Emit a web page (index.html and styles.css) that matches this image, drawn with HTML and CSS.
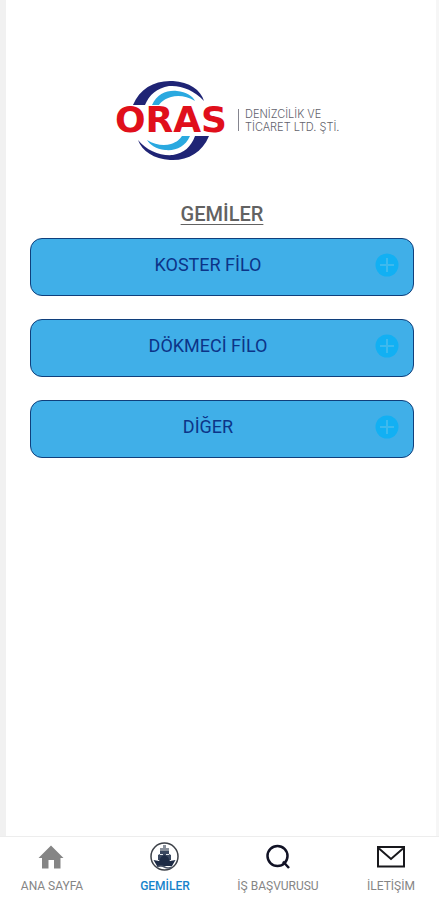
FILE: index.html
```html
<!DOCTYPE html>
<html lang="tr">
<head>
<meta charset="utf-8">
<meta name="viewport" content="width=device-width, initial-scale=1">
<title>Gemiler</title>
<link rel="stylesheet" href="styles.css">
</head>
<body>
<main class="page">
  <header class="brand">
    <svg class="brand-logo" viewBox="0 0 230 82" role="img" aria-label="ORAS Denizcilik ve Ticaret Ltd. Şti.">
      <path fill="#1f2475" d="M22 25C29 8 44 0 62 1C78 2 90 10 93 21C83 10 70 5 58 6C46 8 38 15 34 25Z"/>
      <path fill="#2aa9e0" d="M41 25C46 14 56 10 66 11C75 12 82 16 84 21C76 16 67 15 60 17C54 19 51 21 48 25Z"/>
      <path fill="#1f2475" d="M98 56C91 73 76 81 59 80C43 79 31 71 27 60C36 71 49 76 62 75C73 73 80 67 84 56Z"/>
      <path fill="#2aa9e0" d="M79 56C74 67 65 71 54 70C45 69 39 65 36 60C44 65 53 66 60 64C66 62 69 59 71 56Z"/>
      <text class="logo-name" x="60" y="52" text-anchor="middle">ORAS</text>
      <path stroke="#85858f" stroke-width="1" d="M127.500 29V51"/>
      <text class="logo-caption" x="134" y="38">DENİZCİLİK VE</text>
      <text class="logo-caption" x="134" y="51">TİCARET LTD. ŞTİ.</text>
    </svg>
  </header>
  <h1 class="title">GEMİLER</h1>
  <div class="fleets">
    <button class="fleet" type="button"><span class="fleet-name">KOSTER FİLO</span>
      <svg class="plus" viewBox="0 0 24 24" aria-hidden="true"><circle cx="12" cy="12" r="11.500"/><path d="M12 5V19M5 12H19"/></svg></button>
    <button class="fleet" type="button"><span class="fleet-name">DÖKMECİ FİLO</span>
      <svg class="plus" viewBox="0 0 24 24" aria-hidden="true"><circle cx="12" cy="12" r="11.500"/><path d="M12 5V19M5 12H19"/></svg></button>
    <button class="fleet" type="button"><span class="fleet-name">DİĞER</span>
      <svg class="plus" viewBox="0 0 24 24" aria-hidden="true"><circle cx="12" cy="12" r="11.500"/><path d="M12 5V19M5 12H19"/></svg></button>
  </div>
</main>
<nav class="tabs">
  <a class="tab" href="#ana-sayfa">
    <svg class="tab-icon" viewBox="0 0 30 30" aria-hidden="true"><path fill="#858585" d="M14 3.500L1.500 16H5V26.500H11.500V18H17V26.500H23.500V16H26.500Z"/></svg>
    <span>ANA SAYFA</span></a>
  <a class="tab tab-active" href="#gemiler" aria-current="page">
    <svg class="tab-icon" viewBox="0 0 30 30" aria-hidden="true">
      <circle cx="14.500" cy="14.500" r="13.500" fill="#fff" stroke="#3d4148" stroke-width="1.500"/>
      <path fill="#89909b" d="M13 3H16V6H19V9H10V6H13Z"/>
      <path fill="#39475f" d="M10 9H19V12L21 13V18H8V13L10 12Z"/>
      <path stroke="#e4e7eb" d="M10 12.500H13M16 12.500H19"/>
      <path fill="#1d2b45" d="M3.500 18L9 19L11 15L14.500 13L18 15L20 19L25.500 18L22 24H7Z"/>
      <path fill="none" stroke="#4b5567" stroke-width="1.500" d="M7 25Q11 23 14.500 25T22 25"/>
    </svg>
    <span>GEMİLER</span></a>
  <a class="tab" href="#is-basvurusu">
    <svg class="tab-icon" viewBox="0 0 30 30" aria-hidden="true"><g fill="none" stroke="#111225" stroke-width="2.500"><circle cx="14.500" cy="14" r="10"/><path d="M20 19.500L26 26"/></g></svg>
    <span>İŞ BAŞVURUSU</span></a>
  <a class="tab" href="#iletisim">
    <svg class="tab-icon" viewBox="0 0 30 30" aria-hidden="true"><g fill="none" stroke="#18181c" stroke-width="2"><path d="M2 5H28V24.500H2Z"/><path d="M3 6.500L15 17L27 6.500"/></g></svg>
    <span>İLETİŞİM</span></a>
</nav>
</body>
</html>
```
FILE: styles.css
```css
* { box-sizing: border-box; }
body {
  margin: 0;
  min-height: 100vh;
  display: flex;
  flex-direction: column;
  background: #fff;
  font-family: Roboto, "Liberation Sans", sans-serif;
}
.page {
  flex: 1;
  padding: 80px 22px 24px 24px;
  border-left: 6px solid #f1f1f1;
  border-right: 3px solid #f6f6f6;
}
.brand {
  display: flex;
  justify-content: center;
  padding-left: 8px;
}
.brand-logo { width: 230px; height: 82px; overflow: visible; }
.logo-name {
  font: bold 36px "DejaVu Sans", sans-serif;
  fill: #e00f1b;
}
.logo-caption {
  font: 300 11px Inter, sans-serif;
  fill: #62626c;
}
.title {
  margin: 40px 0 0;
  font-size: 20px;
  line-height: 24px;
  font-weight: 500;
  text-align: center;
  color: #626262;
  text-decoration: underline;
  text-decoration-thickness: 1px;
  text-underline-offset: 3px;
}
.fleets {
  display: grid;
  gap: 23px;
  margin-top: 12px;
}
.fleet {
  display: flex;
  align-items: center;
  gap: 4px;
  width: 100%;
  height: 58px;
  padding: 0 14px 4px;
  border: 1px solid #103f7c;
  border-radius: 12px;
  background: #40afe8;
  color: #0c3488;
  font-family: inherit;
  font-size: 18px;
  line-height: 24px;
}
.fleet-name { flex: 1; text-align: center; }
.plus { width: 24px; height: 24px; }
.plus circle { fill: #12b0f3; }
.plus path { stroke: #3db9ee; stroke-width: 2; }
.tabs {
  display: flex;
  justify-content: space-between;
  height: 64px;
  padding: 5px 8px 0 12px;
  border-top: 1px solid #ededed;
}
.tab {
  display: flex;
  flex-direction: column;
  align-items: center;
  gap: 7px;
  width: 80px;
  color: #858585;
  font-size: 12px;
  line-height: 14px;
  text-decoration: none;
  white-space: nowrap;
}
.tab-active { color: #1683cb; font-weight: 500; }
.tab-icon { width: 30px; height: 30px; }
```
